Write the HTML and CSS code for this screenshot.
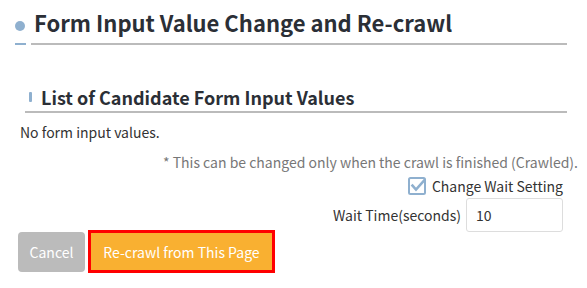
FILE: index.html
```html
<!DOCTYPE html>
<html lang="en">
<head>
  <meta charset="UTF-8">
  <title>Form Input Value Change and Re-crawl</title>
  <link rel="stylesheet" href="styles.css">
</head>
<body>
  <div class="panel">
    <h2 class="title">Form Input Value Change and Re-crawl</h2>

    <h3 class="subtitle">List of Candidate Form Input Values</h3>
    <p class="empty">No form input values.</p>

    <p class="note">* This can be changed only when the crawl is finished (Crawled).</p>

    <div class="settings">
      <label class="check">
        <span class="box">
          <svg width="18" height="18" viewBox="0 0 18 18">
            <rect x="1" y="1" width="16" height="16" rx="1.5" fill="#fff" stroke="#8fb0cf" stroke-width="2"/>
            <path d="M4.5 8.5 L8 12.5 L16.5 3" fill="none" stroke="#8fb0cf" stroke-width="2.6" stroke-linecap="square"/>
          </svg>
        </span>
        Change Wait Setting
      </label>
      <div class="wait">
        <span>Wait Time(seconds)</span>
        <input class="wait-input" type="text" value="10">
      </div>
    </div>

    <div class="actions">
      <button class="btn cancel">Cancel</button>
      <button class="btn recrawl">Re-crawl from This Page</button>
    </div>
  </div>
</body>
</html>
```

FILE: styles.css
```css
body {
  margin: 0;
  background-color: #fff;
  color: #333;
  font-family: "Noto Sans CJK JP", "Noto Sans", sans-serif;
}
.panel {
  width: 587px;
  height: 288px;
}
.title {
  position: relative;
  margin: 0 20px 0 31px;
  padding: 9px 0 7px 3px;
  font-size: 22px;
  line-height: 27px;
  font-weight: bold;
  color: #2b2f36;
  border-bottom: 2px solid #bbb;
}
.title::before {
  content: "";
  position: absolute;
  left: -16px;
  top: 21px;
  width: 10px;
  height: 10px;
  border-radius: 50%;
  background-color: #8fb0cf;
}
.title::after {
  content: "";
  position: absolute;
  left: -16px;
  bottom: -2px;
  width: 11px;
  height: 2px;
  background-color: #8fb0cf;
}
.subtitle {
  position: relative;
  margin: 40px 20px 0 25px;
  padding: 0 0 2px 16px;
  font-size: 18px;
  line-height: 24px;
  font-weight: bold;
  color: #2b2f36;
  border-bottom: 2px solid #bbb;
}
.subtitle::before {
  content: "";
  position: absolute;
  left: 4px;
  top: 7px;
  width: 3px;
  height: 10px;
  border-radius: 1px;
  background-color: #8fb0cf;
}
.empty {
  margin: 9px 0 0 20px;
  font-size: 14px;
  line-height: 20px;
}
.note {
  margin: 10px 9px 0 0;
  text-align: right;
  font-size: 14px;
  line-height: 20px;
  color: #777;
}
.settings {
  display: flex;
  flex-direction: column;
  align-items: flex-end;
  gap: 2px;
  margin: 4px 24px 0 0;
  font-size: 14px;
  color: #333;
}
.check {
  display: flex;
  align-items: center;
  gap: 6px;
  line-height: 20px;
}
.box {
  display: flex;
}
.wait {
  display: flex;
  align-items: center;
  gap: 5px;
}
.wait-input {
  box-sizing: border-box;
  width: 97px;
  height: 34px;
  padding: 0 9px;
  border: 1px solid #ddd;
  border-radius: 3px;
  font-family: inherit;
  font-size: 14px;
  color: #333;
  outline: none;
}
.actions {
  display: flex;
  align-items: center;
  gap: 3px;
  margin: -2px 0 0 18px;
}
.btn {
  border: none;
  color: #fff;
  font-family: inherit;
  font-size: 14px;
  cursor: pointer;
}
.cancel {
  width: 67px;
  height: 40px;
  border-radius: 4px;
  background-color: #bbb;
}
.recrawl {
  width: 187px;
  height: 43px;
  border: 3px solid #f00;
  background-color: #f9b031;
}
```
